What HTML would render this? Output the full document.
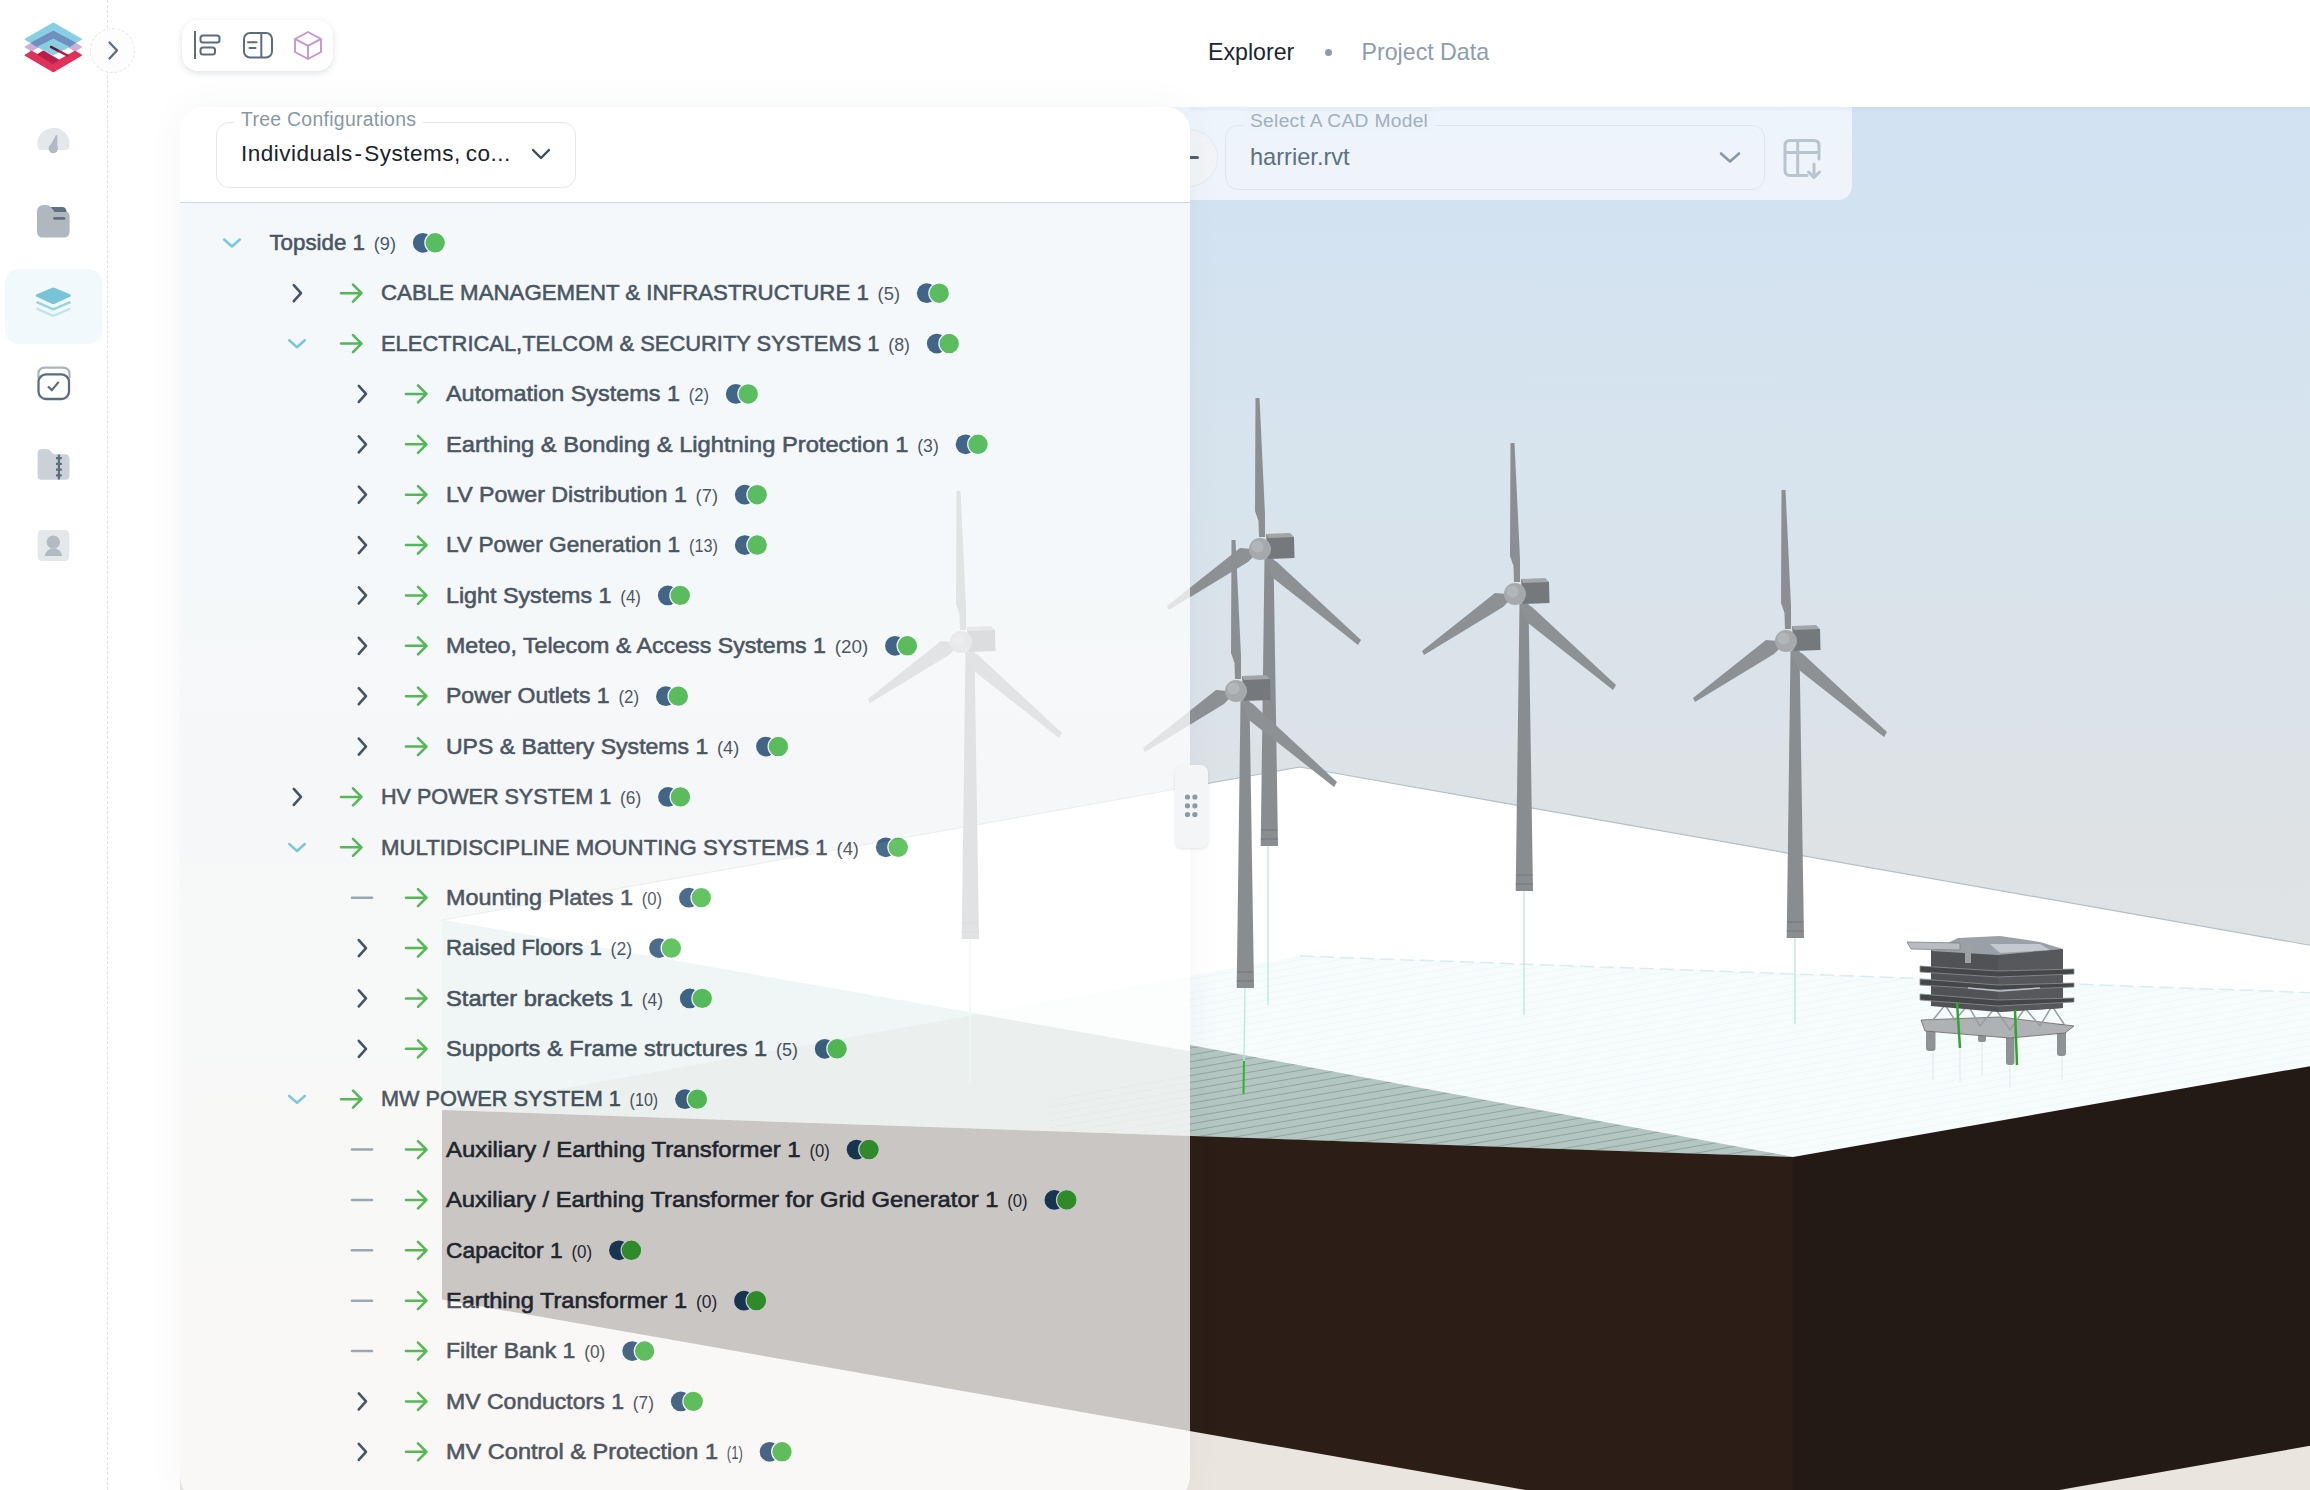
<!DOCTYPE html>
<html><head><meta charset="utf-8">
<style>
*{box-sizing:border-box}
html,body{margin:0;padding:0}
body{width:2310px;height:1490px;overflow:hidden;position:relative;background:#fff;font-family:"Liberation Sans",sans-serif}
.abs{position:absolute}
.lbl{font-family:"Liberation Sans",sans-serif;font-size:22.6px;fill:#1a2835;stroke:#1a2835;stroke-width:0.6px}
.cnt{font-family:"Liberation Sans",sans-serif;font-size:18px;fill:#1a2835}
.chd{fill:none;stroke:#5cc0d8;stroke-width:2.6;stroke-linecap:round;stroke-linejoin:round}
.chr{fill:none;stroke:#13253a;stroke-width:2.6;stroke-linecap:round;stroke-linejoin:round}
.dash{fill:none;stroke:#8393a3;stroke-width:2.6;stroke-linecap:round}
.arr{fill:none;stroke:#28a928;stroke-width:2.6;stroke-linecap:round;stroke-linejoin:round}
.db{fill:#103c65}
.dg{fill:#31b030;stroke:#fff;stroke-width:1.2}
</style></head><body>

<svg width="2310" height="1490" viewBox="0 0 2310 1490" style="position:absolute;left:0;top:0">
<defs>
 <linearGradient id="sky" x1="0" y1="107" x2="0" y2="1490" gradientUnits="userSpaceOnUse">
  <stop offset="0" stop-color="#d2e2f3"/>
  <stop offset="0.25" stop-color="#d7e4ee"/>
  <stop offset="0.49" stop-color="#dde2e6"/>
  <stop offset="0.75" stop-color="#e4e4e2"/>
  <stop offset="1" stop-color="#ebe5df"/>
 </linearGradient>
 <pattern id="hatch" patternUnits="userSpaceOnUse" width="40" height="6.8" patternTransform="rotate(-9.9)">
  <rect width="40" height="6.8" fill="#b3c6c1"/>
  <rect y="5.8" width="40" height="1" fill="#90a49f"/>
 </pattern>
 <pattern id="hatch2" patternUnits="userSpaceOnUse" width="40" height="6.8" patternTransform="rotate(-9.9)">
  <rect y="5.8" width="40" height="0.8" fill="#eef6f8"/>
 </pattern>
 <clipPath id="sc"><rect x="180" y="107" width="2130" height="1383"/></clipPath>
 <g id="turb">
  <path d="M4.5 10 L13.5 10 L18 297 L0.7 297 Z" fill="#8a8d90"/>
  <path d="M0.7 290 L18 290 M1 281 L17.5 281" stroke="#6f7275" stroke-width="0.8"/>
  <path d="M-4.5 -151 L-0.5 -151 L5 -35 L5 -12 L-1 -12 L-1.5 -28 L-5 -38 Z" fill="#8c8f92"/>
  <path d="M-93 57 L-20 -1 L-8 0 L-5 6 L-12 13 L-91 61 Z" fill="#8e9194"/>
  <path d="M7 7 L17 13 L101 91 L98 96 L13 29 L5 12 Z" fill="#8e9194"/>
  <path d="M6 -15 L34 -12 L34.5 9 L8 10 Z" fill="#76797c"/>
  <path d="M6 -15 L30 -16 L34 -12 L8 -11 Z" fill="#a3a6a9"/>
  <circle cx="0" cy="0" r="11" fill="#a6a9ac"/>
  <circle cx="-2.5" cy="-2.5" r="6" fill="#b3b6b9"/>
 </g>
</defs>
<g clip-path="url(#sc)">
 <rect x="0" y="0" width="2310" height="1490" fill="url(#sky)"/>
 <!-- water top face -->
 <path d="M442 920 L1300 767 L2320 947 L2320 1066 L1793 1157 Z" fill="#ffffff"/>
 <!-- seabed top (seen through water) -->
 <path d="M1300 956 L2320 993 L2320 1066 L1793 1157 L442 1110 Z" fill="#f6fbfc"/>
 <path d="M1300 956 L2320 993 L2320 1066 L1793 1157 L442 1110 Z" fill="url(#hatch2)"/>
 <path d="M1300 956 L2320 993" stroke="#d9ecf0" stroke-width="1.5" stroke-dasharray="14 6" fill="none"/>
 <!-- water side face -->
 <path d="M442 920 L1793 1157 L442 1110 Z" fill="#b1c4bf"/>
 <path d="M1050 1100 L1190 1070 L1190 1136 L1050 1131 Z" fill="url(#hatch)" opacity="0.6"/>
 <path d="M1190 1045 L1793 1157 L1190 1136 Z" fill="url(#hatch)"/>
 <path d="M442 920 L979 1014 L442 1110 Z" fill="#c4d9dc"/>
 <!-- box faces -->
 <path d="M442 1110 L1793 1157 L1793 1537 L442 1299.5 Z" fill="#2c1e16"/>
 <path d="M1793 1157 L2320 1064.5 L2320 1444 L1793 1537 Z" fill="#231915"/>
 <!-- far edges -->
 <path d="M442 920 L1300 767 L2320 947" stroke="#b4bec4" stroke-width="1.2" fill="none"/>
 <!-- piles -->
 <g stroke="#b7eadb" stroke-width="1.3">
  <path d="M1245 988 L1244 1061"/><path d="M1268 843 L1268 1005"/><path d="M1524 888 L1524 1015"/><path d="M1795 938 L1795 1024"/><path d="M970 938 L970 1083"/>
 </g>
 <path d="M1244 1061 L1243.5 1094" stroke="#2bb52b" stroke-width="2"/>
 <use href="#turb" transform="translate(961,642)"/>
 <use href="#turb" transform="translate(1260,549)"/>
 <use href="#turb" transform="translate(1515,594)"/>
 <use href="#turb" transform="translate(1786,641)"/>
 <use href="#turb" transform="translate(1236,691)"/>
 <!-- platform -->
 <g>
  <g stroke="#dfe8ee" stroke-width="1"><path d="M1933 1052 L1933 1080 M1960 1048 L1960 1082 M2010 1066 L2010 1088 M2062 1056 L2062 1080 M1982 1042 L1982 1075"/></g>
  <rect x="1926" y="1020" width="9.5" height="31" rx="3" fill="#8f9295"/>
  <rect x="1978" y="1028" width="8" height="14" rx="2" fill="#8f9295"/>
  <rect x="2006" y="1032" width="8.5" height="33" rx="3" fill="#8f9295"/>
  <rect x="2057" y="1024" width="9" height="32" rx="3" fill="#8f9295"/>
  <path d="M1921 1020 L2000 1017 L2074 1026 L2065 1033 L2010 1038 L1925 1031 Z" fill="#aeb2b5" stroke="#6e6660" stroke-width="0.8"/>
  <g stroke="#9a9da0" stroke-width="1.5" fill="none"><path d="M1933 1020 L1945 1005 L1955 1020 L1968 1005 L1980 1026 L1995 1008 L2010 1030 L2025 1008 L2040 1026 L2052 1006 L2064 1024"/></g>
  <path d="M1931 950 L1998 951 L2063 949 L2063 1008 L1998 1012 L1931 1006 Z" fill="#505255"/>
  <path d="M1998 951 L2063 949 L2063 1008 L1998 1012 Z" fill="#56585b"/>
  <path d="M1958 938 L2000 936 L2040 942 L2063 949 L1998 955 L1931 951 Z" fill="#9aa0a5"/>
  <path d="M1990 944 L2040 944 L2050 950 L2000 953 Z" fill="#c3c9ce"/>
  <path d="M1907 942 L1960 943 L1960 950 L1911 949 Z" fill="#b9bdc0" stroke="#7c8084" stroke-width="0.8"/>
  <rect x="1965" y="943" width="6" height="20" fill="#9da1a4"/>
  <path d="M1920 966 L1998 971 L2074 969 L2074 974 L1998 977 L1920 972 Z" fill="#444648" stroke="#8d9194" stroke-width="0.8"/>
  <path d="M1920 979 L1998 985 L2074 983 L2074 987 L1998 990 L1920 985 Z" fill="#444648" stroke="#8d9194" stroke-width="0.8"/>
  <path d="M1920 994 L1998 1000 L2074 998 L2074 1002 L1998 1006 L1920 1000 Z" fill="#444648" stroke="#8d9194" stroke-width="0.8"/>
  <path d="M1968 988 L2000 991 L2040 988" stroke="#b9bec2" stroke-width="1.5" fill="none"/>
  <path d="M1957 1002 L1960 1048 M2015 1010 L2017 1065" stroke="#2fa52f" stroke-width="2.5"/>
 </g>
</g>
</svg>

<div class="abs" style="left:1100px;top:107px;width:752px;height:93px;border-radius:0 0 14px 0;background:rgba(255,255,255,0.62)"></div>
<div class="abs" style="left:1224.5px;top:125px;width:540px;height:65px;border:1.2px solid #dfe6ee;border-radius:13px"></div>
<div class="abs" style="left:1243px;top:110px;padding:0 7px;font-size:19.2px;line-height:22px;letter-spacing:0.3px;color:#9fb0bf;white-space:nowrap;background:#edf3fa">Select A CAD Model</div>
<div class="abs" style="left:1250px;top:143px;font-size:23.6px;line-height:28px;color:#5f707f;white-space:nowrap">harrier.rvt</div>
<svg class="abs" style="left:1716px;top:148px" width="28" height="20"><path d="M5 5.5 L14 13.5 L23 5.5" fill="none" stroke="#8898a8" stroke-width="2.6" stroke-linecap="round" stroke-linejoin="round"/></svg>
<svg class="abs" style="left:1780px;top:136px" width="46" height="46" viewBox="1780 136 46 46">
 <path d="M1807 175.5 L1790 175.5 Q1785 175.5 1785 170.5 L1785 145.5 Q1785 140.5 1790 140.5 L1814 140.5 Q1819 140.5 1819 145.5 L1819 159" fill="none" stroke="#b8c4d0" stroke-width="3" stroke-linecap="round"/>
 <path d="M1785 152.6 L1819 152.6 M1797.7 140.5 L1797.7 175.5" stroke="#b8c4d0" stroke-width="3"/>
 <path d="M1814 164 L1814 177 M1808.5 172 L1814 177.5 L1819.5 172" fill="none" stroke="#b8c4d0" stroke-width="3" stroke-linecap="round" stroke-linejoin="round"/>
</svg>

<div class="abs" style="left:1160px;top:129px;width:58px;height:58px;border-radius:50%;background:#f2f4f7;border:1px solid #e6eaef"></div>
<div class="abs" style="left:1181px;top:156px;width:18px;height:3px;border-radius:2px;background:#51606e"></div>

<div class="abs" style="left:180px;top:107px;width:60px;height:60px;background:#fff"></div>
<div class="abs" style="left:107px;top:0;width:2203px;height:107px;background:#fff"></div>
<div class="abs" style="left:1190px;top:107px;width:1120px;height:6px;background:linear-gradient(rgba(60,80,100,0.05),rgba(60,80,100,0))"></div>
<!-- panel shadow -->
<div class="abs" style="left:180px;top:107px;width:1010px;height:1397px;border-radius:24px 24px 28px 28px;box-shadow:0 0 36px rgba(60,80,100,0.05)"></div>
<!-- panel body translucent -->
<div class="abs" style="left:180px;top:107px;width:1010px;height:1397px;border-radius:24px 24px 28px 28px;overflow:hidden;opacity:0.75;background:#fff">
 <svg width="1010" height="1397" viewBox="180 107 1010 1397" style="position:absolute;left:0;top:0">
 <path d="M224.2 239.60000000000002 L232 246.4 L239.8 239.60000000000002" class="chd"/>
<text x="269.4" y="250.0" class="lbl" textLength="95.6" lengthAdjust="spacingAndGlyphs">Topside 1</text>
<text x="373.8" y="250.0" class="cnt" textLength="22.2" lengthAdjust="spacingAndGlyphs">(9)</text>
<circle cx="422.8" cy="242.80" r="9.9" class="db"/>
<circle cx="435.2" cy="242.80" r="10.3" class="dg"/>
<path d="M293.8 285.175 L301 293.175 L293.8 301.175" class="chr"/>
<path d="M341 293.175 L361 293.175 M353 284.675 L361.5 293.175 L353 301.675" class="arr"/>
<text x="381" y="300.375" class="lbl" textLength="487.8" lengthAdjust="spacingAndGlyphs">CABLE MANAGEMENT &amp; INFRASTRUCTURE 1</text>
<text x="877.6" y="300.375" class="cnt" textLength="22.4" lengthAdjust="spacingAndGlyphs">(5)</text>
<circle cx="926.8" cy="293.18" r="9.9" class="db"/>
<circle cx="939.2" cy="293.18" r="10.3" class="dg"/>
<path d="M289.2 340.35 L297 347.15000000000003 L304.8 340.35" class="chd"/>
<path d="M341 343.55 L361 343.55 M353 335.05 L361.5 343.55 L353 352.05" class="arr"/>
<text x="381" y="350.75" class="lbl" textLength="498.5" lengthAdjust="spacingAndGlyphs">ELECTRICAL,TELCOM &amp; SECURITY SYSTEMS 1</text>
<text x="888.3" y="350.75" class="cnt" textLength="21.7" lengthAdjust="spacingAndGlyphs">(8)</text>
<circle cx="936.8" cy="343.55" r="9.9" class="db"/>
<circle cx="949.2" cy="343.55" r="10.3" class="dg"/>
<path d="M358.8 385.925 L366 393.925 L358.8 401.925" class="chr"/>
<path d="M406 393.925 L426 393.925 M418 385.425 L426.5 393.925 L418 402.425" class="arr"/>
<text x="446" y="401.125" class="lbl" textLength="233.9" lengthAdjust="spacingAndGlyphs">Automation Systems 1</text>
<text x="688.7" y="401.125" class="cnt" textLength="20.3" lengthAdjust="spacingAndGlyphs">(2)</text>
<circle cx="735.8" cy="393.93" r="9.9" class="db"/>
<circle cx="748.2" cy="393.93" r="10.3" class="dg"/>
<path d="M358.8 436.3 L366 444.3 L358.8 452.3" class="chr"/>
<path d="M406 444.3 L426 444.3 M418 435.8 L426.5 444.3 L418 452.8" class="arr"/>
<text x="446" y="451.5" class="lbl" textLength="462.4" lengthAdjust="spacingAndGlyphs">Earthing &amp; Bonding &amp; Lightning Protection 1</text>
<text x="917.2" y="451.5" class="cnt" textLength="21.6" lengthAdjust="spacingAndGlyphs">(3)</text>
<circle cx="965.6" cy="444.30" r="9.9" class="db"/>
<circle cx="978.0" cy="444.30" r="10.3" class="dg"/>
<path d="M358.8 486.675 L366 494.675 L358.8 502.675" class="chr"/>
<path d="M406 494.675 L426 494.675 M418 486.175 L426.5 494.675 L418 503.175" class="arr"/>
<text x="446" y="501.875" class="lbl" textLength="240.8" lengthAdjust="spacingAndGlyphs">LV Power Distribution 1</text>
<text x="695.6" y="501.875" class="cnt" textLength="22.4" lengthAdjust="spacingAndGlyphs">(7)</text>
<circle cx="744.8" cy="494.68" r="9.9" class="db"/>
<circle cx="757.2" cy="494.68" r="10.3" class="dg"/>
<path d="M358.8 537.05 L366 545.05 L358.8 553.05" class="chr"/>
<path d="M406 545.05 L426 545.05 M418 536.55 L426.5 545.05 L418 553.55" class="arr"/>
<text x="446" y="552.25" class="lbl" textLength="234.2" lengthAdjust="spacingAndGlyphs">LV Power Generation 1</text>
<text x="689.0" y="552.25" class="cnt" textLength="29.0" lengthAdjust="spacingAndGlyphs">(13)</text>
<circle cx="744.8" cy="545.05" r="9.9" class="db"/>
<circle cx="757.2" cy="545.05" r="10.3" class="dg"/>
<path d="M358.8 587.425 L366 595.425 L358.8 603.425" class="chr"/>
<path d="M406 595.425 L426 595.425 M418 586.925 L426.5 595.425 L418 603.925" class="arr"/>
<text x="446" y="602.625" class="lbl" textLength="165.5" lengthAdjust="spacingAndGlyphs">Light Systems 1</text>
<text x="620.3" y="602.625" class="cnt" textLength="20.7" lengthAdjust="spacingAndGlyphs">(4)</text>
<circle cx="667.8" cy="595.42" r="9.9" class="db"/>
<circle cx="680.2" cy="595.42" r="10.3" class="dg"/>
<path d="M358.8 637.8 L366 645.8 L358.8 653.8" class="chr"/>
<path d="M406 645.8 L426 645.8 M418 637.3 L426.5 645.8 L418 654.3" class="arr"/>
<text x="446" y="653.0" class="lbl" textLength="380.0" lengthAdjust="spacingAndGlyphs">Meteo, Telecom &amp; Access Systems 1</text>
<text x="834.8" y="653.0" class="cnt" textLength="33.4" lengthAdjust="spacingAndGlyphs">(20)</text>
<circle cx="895.0" cy="645.80" r="9.9" class="db"/>
<circle cx="907.4" cy="645.80" r="10.3" class="dg"/>
<path d="M358.8 688.175 L366 696.175 L358.8 704.175" class="chr"/>
<path d="M406 696.175 L426 696.175 M418 687.675 L426.5 696.175 L418 704.675" class="arr"/>
<text x="446" y="703.375" class="lbl" textLength="163.6" lengthAdjust="spacingAndGlyphs">Power Outlets 1</text>
<text x="618.4" y="703.375" class="cnt" textLength="20.7" lengthAdjust="spacingAndGlyphs">(2)</text>
<circle cx="665.9" cy="696.17" r="9.9" class="db"/>
<circle cx="678.3" cy="696.17" r="10.3" class="dg"/>
<path d="M358.8 738.55 L366 746.55 L358.8 754.55" class="chr"/>
<path d="M406 746.55 L426 746.55 M418 738.05 L426.5 746.55 L418 755.05" class="arr"/>
<text x="446" y="753.75" class="lbl" textLength="262.2" lengthAdjust="spacingAndGlyphs">UPS &amp; Battery Systems 1</text>
<text x="717.0" y="753.75" class="cnt" textLength="22.2" lengthAdjust="spacingAndGlyphs">(4)</text>
<circle cx="766.0" cy="746.55" r="9.9" class="db"/>
<circle cx="778.4" cy="746.55" r="10.3" class="dg"/>
<path d="M293.8 788.925 L301 796.925 L293.8 804.925" class="chr"/>
<path d="M341 796.925 L361 796.925 M353 788.425 L361.5 796.925 L353 805.425" class="arr"/>
<text x="381" y="804.125" class="lbl" textLength="230.2" lengthAdjust="spacingAndGlyphs">HV POWER SYSTEM 1</text>
<text x="620.0" y="804.125" class="cnt" textLength="21.2" lengthAdjust="spacingAndGlyphs">(6)</text>
<circle cx="668.0" cy="796.92" r="9.9" class="db"/>
<circle cx="680.4" cy="796.92" r="10.3" class="dg"/>
<path d="M289.2 844.0999999999999 L297 850.9 L304.8 844.0999999999999" class="chd"/>
<path d="M341 847.3 L361 847.3 M353 838.8 L361.5 847.3 L353 855.8" class="arr"/>
<text x="381" y="854.5" class="lbl" textLength="446.7" lengthAdjust="spacingAndGlyphs">MULTIDISCIPLINE MOUNTING SYSTEMS 1</text>
<text x="836.5" y="854.5" class="cnt" textLength="22.5" lengthAdjust="spacingAndGlyphs">(4)</text>
<circle cx="885.8" cy="847.30" r="9.9" class="db"/>
<circle cx="898.2" cy="847.30" r="10.3" class="dg"/>
<path d="M352 897.675 L372 897.675" class="dash"/>
<path d="M406 897.675 L426 897.675 M418 889.175 L426.5 897.675 L418 906.175" class="arr"/>
<text x="446" y="904.875" class="lbl" textLength="186.9" lengthAdjust="spacingAndGlyphs">Mounting Plates 1</text>
<text x="641.7" y="904.875" class="cnt" textLength="20.4" lengthAdjust="spacingAndGlyphs">(0)</text>
<circle cx="688.9" cy="897.67" r="9.9" class="db"/>
<circle cx="701.3" cy="897.67" r="10.3" class="dg"/>
<path d="M358.8 940.05 L366 948.05 L358.8 956.05" class="chr"/>
<path d="M406 948.05 L426 948.05 M418 939.55 L426.5 948.05 L418 956.55" class="arr"/>
<text x="446" y="955.25" class="lbl" textLength="155.8" lengthAdjust="spacingAndGlyphs">Raised Floors 1</text>
<text x="610.6" y="955.25" class="cnt" textLength="21.6" lengthAdjust="spacingAndGlyphs">(2)</text>
<circle cx="659.0" cy="948.05" r="9.9" class="db"/>
<circle cx="671.4" cy="948.05" r="10.3" class="dg"/>
<path d="M358.8 990.425 L366 998.425 L358.8 1006.425" class="chr"/>
<path d="M406 998.425 L426 998.425 M418 989.925 L426.5 998.425 L418 1006.925" class="arr"/>
<text x="446" y="1005.625" class="lbl" textLength="186.9" lengthAdjust="spacingAndGlyphs">Starter brackets 1</text>
<text x="641.7" y="1005.625" class="cnt" textLength="21.3" lengthAdjust="spacingAndGlyphs">(4)</text>
<circle cx="689.8" cy="998.42" r="9.9" class="db"/>
<circle cx="702.2" cy="998.42" r="10.3" class="dg"/>
<path d="M358.8 1040.8 L366 1048.8 L358.8 1056.8" class="chr"/>
<path d="M406 1048.8 L426 1048.8 M418 1040.3 L426.5 1048.8 L418 1057.3" class="arr"/>
<text x="446" y="1056.0" class="lbl" textLength="321.2" lengthAdjust="spacingAndGlyphs">Supports &amp; Frame structures 1</text>
<text x="776.0" y="1056.0" class="cnt" textLength="21.9" lengthAdjust="spacingAndGlyphs">(5)</text>
<circle cx="824.7" cy="1048.80" r="9.9" class="db"/>
<circle cx="837.1" cy="1048.80" r="10.3" class="dg"/>
<path d="M289.2 1095.975 L297 1102.7749999999999 L304.8 1095.975" class="chd"/>
<path d="M341 1099.175 L361 1099.175 M353 1090.675 L361.5 1099.175 L353 1107.675" class="arr"/>
<text x="381" y="1106.375" class="lbl" textLength="239.8" lengthAdjust="spacingAndGlyphs">MW POWER SYSTEM 1</text>
<text x="629.6" y="1106.375" class="cnt" textLength="28.6" lengthAdjust="spacingAndGlyphs">(10)</text>
<circle cx="685.0" cy="1099.17" r="9.9" class="db"/>
<circle cx="697.4" cy="1099.17" r="10.3" class="dg"/>
<path d="M352 1149.55 L372 1149.55" class="dash"/>
<path d="M406 1149.55 L426 1149.55 M418 1141.05 L426.5 1149.55 L418 1158.05" class="arr"/>
<text x="446" y="1156.75" class="lbl" textLength="354.6" lengthAdjust="spacingAndGlyphs">Auxiliary / Earthing Transformer 1</text>
<text x="809.4" y="1156.75" class="cnt" textLength="20.4" lengthAdjust="spacingAndGlyphs">(0)</text>
<circle cx="856.6" cy="1149.55" r="9.9" class="db"/>
<circle cx="869.0" cy="1149.55" r="10.3" class="dg"/>
<path d="M352 1199.925 L372 1199.925" class="dash"/>
<path d="M406 1199.925 L426 1199.925 M418 1191.425 L426.5 1199.925 L418 1208.425" class="arr"/>
<text x="446" y="1207.125" class="lbl" textLength="552.4" lengthAdjust="spacingAndGlyphs">Auxiliary / Earthing Transformer for Grid Generator 1</text>
<text x="1007.2" y="1207.125" class="cnt" textLength="20.4" lengthAdjust="spacingAndGlyphs">(0)</text>
<circle cx="1054.4" cy="1199.92" r="9.9" class="db"/>
<circle cx="1066.8" cy="1199.92" r="10.3" class="dg"/>
<path d="M352 1250.3 L372 1250.3" class="dash"/>
<path d="M406 1250.3 L426 1250.3 M418 1241.8 L426.5 1250.3 L418 1258.8" class="arr"/>
<text x="446" y="1257.5" class="lbl" textLength="116.6" lengthAdjust="spacingAndGlyphs">Capacitor 1</text>
<text x="571.4" y="1257.5" class="cnt" textLength="20.8" lengthAdjust="spacingAndGlyphs">(0)</text>
<circle cx="619.0" cy="1250.30" r="9.9" class="db"/>
<circle cx="631.4" cy="1250.30" r="10.3" class="dg"/>
<path d="M352 1300.675 L372 1300.675" class="dash"/>
<path d="M406 1300.675 L426 1300.675 M418 1292.175 L426.5 1300.675 L418 1309.175" class="arr"/>
<text x="446" y="1307.875" class="lbl" textLength="241.1" lengthAdjust="spacingAndGlyphs">Earthing Transformer 1</text>
<text x="695.9" y="1307.875" class="cnt" textLength="21.3" lengthAdjust="spacingAndGlyphs">(0)</text>
<circle cx="744.0" cy="1300.67" r="9.9" class="db"/>
<circle cx="756.4" cy="1300.67" r="10.3" class="dg"/>
<path d="M352 1351.05 L372 1351.05" class="dash"/>
<path d="M406 1351.05 L426 1351.05 M418 1342.55 L426.5 1351.05 L418 1359.55" class="arr"/>
<text x="446" y="1358.25" class="lbl" textLength="129.4" lengthAdjust="spacingAndGlyphs">Filter Bank 1</text>
<text x="584.2" y="1358.25" class="cnt" textLength="21.2" lengthAdjust="spacingAndGlyphs">(0)</text>
<circle cx="632.2" cy="1351.05" r="9.9" class="db"/>
<circle cx="644.6" cy="1351.05" r="10.3" class="dg"/>
<path d="M358.8 1393.425 L366 1401.425 L358.8 1409.425" class="chr"/>
<path d="M406 1401.425 L426 1401.425 M418 1392.925 L426.5 1401.425 L418 1409.925" class="arr"/>
<text x="446" y="1408.625" class="lbl" textLength="178.0" lengthAdjust="spacingAndGlyphs">MV Conductors 1</text>
<text x="632.8" y="1408.625" class="cnt" textLength="21.2" lengthAdjust="spacingAndGlyphs">(7)</text>
<circle cx="680.8" cy="1401.42" r="9.9" class="db"/>
<circle cx="693.2" cy="1401.42" r="10.3" class="dg"/>
<path d="M358.8 1443.8 L366 1451.8 L358.8 1459.8" class="chr"/>
<path d="M406 1451.8 L426 1451.8 M418 1443.3 L426.5 1451.8 L418 1460.3" class="arr"/>
<text x="446" y="1459.0" class="lbl" textLength="272.0" lengthAdjust="spacingAndGlyphs">MV Control &amp; Protection 1</text>
<text x="726.8" y="1459.0" class="cnt" textLength="16.0" lengthAdjust="spacingAndGlyphs">(1)</text>
<circle cx="769.6" cy="1451.80" r="9.9" class="db"/>
<circle cx="782.0" cy="1451.80" r="10.3" class="dg"/>
 </svg>
</div>
<!-- panel header opaque -->
<div class="abs" style="left:180px;top:107px;width:1010px;height:96px;border-radius:24px 24px 0 0;background:#fff;border-bottom:1.5px solid #cad8e5"></div>
<div class="abs" style="left:216px;top:122px;width:360px;height:66px;border:1.5px solid #e3e8ee;border-radius:13px"></div>
<div class="abs" style="left:234px;top:108px;padding:0 7px;background:#fff;font-size:19.4px;letter-spacing:0.3px;color:#8797a6;line-height:22px">Tree Configurations</div>
<div class="abs" style="left:241px;top:140px;font-size:22.5px;letter-spacing:0.5px;color:#17222d;line-height:28px;white-space:nowrap">Individuals<span style="word-spacing:-5px"> - </span>Systems,<span style="word-spacing:-2px"> </span>co...</div>
<svg class="abs" style="left:530px;top:146px" width="24" height="16"><path d="M3 4 L11 12 L19 4" fill="none" stroke="#3c4a57" stroke-width="2.4" stroke-linecap="round" stroke-linejoin="round"/></svg>


<div class="abs" style="left:1175px;top:765px;width:33px;height:83px;border-radius:7px;background:#f3f5f7;box-shadow:0 1px 3px rgba(0,0,0,0.10)"></div>
<svg class="abs" style="left:1175px;top:765px" width="33" height="83" viewBox="1175 765 33 83">
 <g fill="#8a9aa8"><circle cx="1187.5" cy="797" r="2.6"/><circle cx="1194.9" cy="797" r="2.6"/><circle cx="1187.5" cy="805.8" r="2.6"/><circle cx="1194.9" cy="805.8" r="2.6"/><circle cx="1187.5" cy="814.5" r="2.6"/><circle cx="1194.9" cy="814.5" r="2.6"/></g>
</svg>


<svg class="abs" style="left:0;top:0" width="107" height="600" viewBox="0 0 107 600">
 <!-- logo -->
 <g stroke-linejoin="round" stroke-width="1.2">
  <path d="M25.1 47 L31.7 43 L38 47 L31.5 51 Z" fill="#cdb0d9" stroke="#cdb0d9"/>
  <path d="M81.5 47 L74.9 43 L68.6 47 L75.1 51 Z" fill="#cdb0d9" stroke="#cdb0d9"/>
  <path d="M25.1 55.2 L31.5 51.3 L53.3 63.5 L75.1 51.3 L81.5 55.2 L53.3 71.7 Z" fill="#e0315a" stroke="#e0315a"/>
  <path d="M37.9 54.6 L43.4 51.1 L58.5 60 L53.1 63.2 Z" fill="#b91e48" stroke="#b91e48"/>
  <path d="M25.1 39.2 L53.3 23.1 L81.5 39.2 L74.9 42.9 L53.3 31.2 L31.7 42.9 Z" fill="#89cfe3" stroke="#89cfe3"/>
  <path d="M31.7 42.9 L53.3 31.2 L74.9 42.9 L68.7 47 L53.3 39.2 L37.9 47 Z" fill="#6f8fbf" stroke="#6f8fbf"/>
  <path d="M37.9 47 L53.3 39.2 L68.7 47 L53.3 54.8 Z" fill="#89cfe3" stroke="#89cfe3"/>
  <path d="M51 46.9 L58.5 50.9" stroke="#6b1340" stroke-width="2.4" stroke-linecap="round"/>
  <path d="M58.5 50.9 L67.5 55.5" stroke="#b5193f" stroke-width="2.4" stroke-linecap="round"/>
 </g>
 <!-- gauge -->
 <path d="M37.5 146 A16 16 0 0 1 69.5 142 L69.5 146 Q69.5 150 65.5 150 L41.5 150 Q37.5 150 37.5 146 Z" fill="#e5e8eb"/>
 <circle cx="53.3" cy="148.6" r="4.7" fill="#b2b9c1"/><path d="M50 146 L56 135 L57.4 135.2 L57.3 147 Z" fill="#b2b9c1"/>
 <!-- folder -->
 <path d="M37 212 Q37 205 44 205 L46 205 Q49.5 205 52 208.5 L53.5 211 L64 211 Q69.6 211 69.6 217 L69.6 231.6 Q69.6 237.6 63.6 237.6 L43 237.6 Q37 237.6 37 231.6 Z" fill="#b0b7bf"/>
 <path d="M50.7 207.1 L62 207.1 Q66 207.1 66.5 211.5 L66.5 212 L54.5 212 Z" fill="#5f7080"/>
 <path d="M54.5 218.4 L64 218.4" stroke="#5f7080" stroke-width="2.6" stroke-linecap="round"/>
 <!-- active bg -->
 <rect x="5" y="269" width="97" height="75" rx="14" fill="#f1f9fc"/>
 <!-- layers -->
 <path d="M37 296 Q36 295.5 37 295 L52 288.6 Q53.3 288 54.6 288.6 L69.6 295 Q70.6 295.5 69.6 296 L54.6 303 Q53.3 303.6 52 303 Z" fill="#79c5d8" stroke="#79c5d8" stroke-width="1.5" stroke-linejoin="round"/>
 <path d="M37.3 302.4 L51.5 308.6 Q53.3 309.4 55.1 308.6 L69.7 302.4" fill="none" stroke="#97d3e0" stroke-width="2.4" stroke-linecap="round"/>
 <path d="M37.3 308.9 L51.5 315.1 Q53.3 315.9 55.1 315.1 L69.7 308.9" fill="none" stroke="#c1e5ed" stroke-width="2.4" stroke-linecap="round"/>
 <!-- checkbox -->
 <path d="M38.4 378 L38.4 374 Q38.4 367.6 45 367.6 L62.5 367.6 Q69.5 367.6 69.5 374 L69.5 378" fill="none" stroke="#a9b4be" stroke-width="2.2"/>
 <rect x="38.5" y="374.4" width="30.5" height="24.6" rx="7.5" fill="#fff" stroke="#5b6d7c" stroke-width="2.3"/>
 <path d="M48.8 387.2 L51.8 390.1 L58 382.7" fill="none" stroke="#5b6d7c" stroke-width="2.2" stroke-linecap="square"/>
 <!-- zip folder -->
 <path d="M37.6 453 Q37.6 449.1 42 449.1 L46 449.1 Q49 449.1 51 451.5 Q52.5 454.2 55 454.2 L65 454.2 Q69.5 454.2 69.5 459 L69.5 475.5 Q69.5 479.7 65.5 479.7 L41.6 479.7 Q37.6 479.7 37.6 475.5 Z" fill="#cbd1d6"/>
 <path d="M58.9 454.5 L58.9 479.5 M56 458.2 L61.8 458.2 M56 463.9 L61.8 463.9 M56 469.6 L61.8 469.6 M56 475.3 L61.8 475.3" stroke="#5d6e7e" stroke-width="2.2"/>
 <!-- contact -->
 <rect x="37.7" y="529.9" width="31.5" height="31.1" rx="4.5" fill="#e5e8eb"/>
 <circle cx="53.3" cy="542.2" r="6.6" fill="#b3bac2"/>
 <path d="M44.8 556 Q46.5 548.2 53.3 548.2 Q60.5 548.2 62.3 556 Z" fill="#b3bac2"/>
</svg>
<div class="abs" style="left:106.5px;top:0;width:0;height:1490px;border-left:1px dashed #dfe3e8"></div>
<div class="abs" style="left:90px;top:28px;width:45px;height:45px;border-radius:50%;border:1px dashed #e3e7eb;background:#fdfdfe"></div>
<svg class="abs" style="left:100px;top:36px" width="26" height="30"><path d="M9.5 6.5 L17 14.5 L9.5 22.5" fill="none" stroke="#5b6d7c" stroke-width="2.3" stroke-linecap="round" stroke-linejoin="round"/></svg>


<div class="abs" style="left:182px;top:20px;width:151px;height:51px;border-radius:16px;background:#fff;box-shadow:0 3px 6px rgba(40,60,80,0.10),0 0 10px rgba(40,60,80,0.04)"></div>
<svg class="abs" style="left:182px;top:20px" width="151" height="51" viewBox="182 20 151 51">
 <path d="M195 31 L195 59" stroke="#5b6d7c" stroke-width="2"/>
 <rect x="200.5" y="35.5" width="19" height="7" rx="2.5" fill="none" stroke="#5b6d7c" stroke-width="2"/>
 <rect x="200.5" y="47.5" width="14.5" height="7" rx="2.5" fill="none" stroke="#5b6d7c" stroke-width="2"/>
 <rect x="244" y="33" width="28" height="24.5" rx="6" fill="none" stroke="#5b6d7c" stroke-width="2"/>
 <path d="M261.3 33 L261.3 57.5" stroke="#5b6d7c" stroke-width="2"/>
 <path d="M248 42.3 L256.5 42.3 M249.5 48 L255.5 48" stroke="#5b6d7c" stroke-width="2" stroke-linecap="round"/>
 <path d="M308 32 L321 39 L321 52 L308 59 L295 52 L295 39 Z" fill="none" stroke="#c795d3" stroke-width="1.9" stroke-linejoin="round"/>
 <path d="M295.5 39.2 L308 45.8 L320.5 39.2 M308 45.8 L308 58.5" fill="none" stroke="#c795d3" stroke-width="1.9" stroke-linejoin="round"/>
</svg>


<div class="abs" style="left:1208px;top:37px;font-size:23.2px;line-height:30px;color:#1b2631;white-space:nowrap">Explorer</div>
<div class="abs" style="left:1324.5px;top:48.7px;width:7.6px;height:7.6px;border-radius:50%;background:#8c9baa"></div>
<div class="abs" style="left:1361.5px;top:37px;font-size:23.2px;line-height:30px;color:#8e9dab;white-space:nowrap">Project Data</div>

</body></html>
